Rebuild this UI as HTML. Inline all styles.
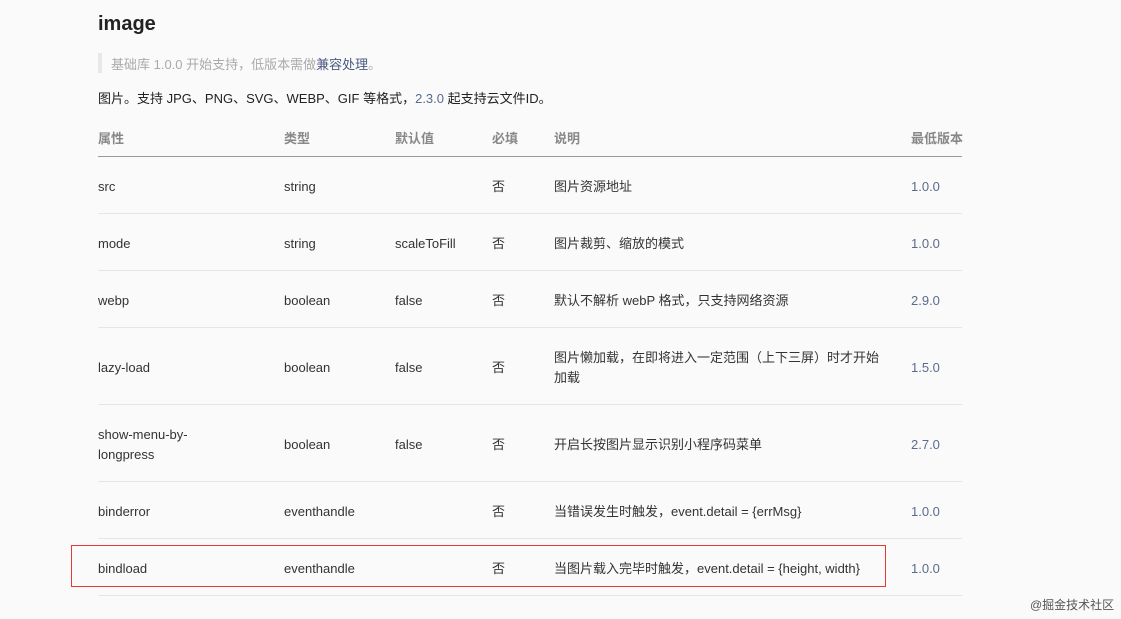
<!DOCTYPE html><html><head><meta charset="utf-8"><style>
body{margin:0;width:1121px;height:619px;background:#fafafa;font-family:"Liberation Sans","Noto Sans CJK SC",sans-serif;position:relative;overflow:hidden;color:#333;font-size:13px}
.a{position:absolute;white-space:nowrap;line-height:20px;transform:translateY(2px)}
.l{position:absolute;left:98px;width:864px;height:1px;background:#e6e6e6}
.v{color:#5a6b8c}
.h{color:#888;font-weight:bold}
.r{position:absolute;background:rgb(229,57,53)}
</style></head><body>
<div class="a" style="left:98px;top:12px;font-size:20px;font-weight:bold;color:#222;line-height:24px;transform:none">image</div>
<div style="position:absolute;left:98px;top:53px;width:4px;height:20px;background:#e8e8e8"></div>
<div class="a" style="left:111px;top:53px;color:#aaa">基础库 1.0.0 开始支持，低版本需做<span style="color:#4a5a80">兼容处理</span>。</div>
<div class="a" style="left:98px;top:87px;color:#222">图片。支持 JPG、PNG、SVG、WEBP、GIF 等格式，<span class="v">2.3.0</span> 起支持云文件ID。</div>
<div class="a h" style="left:98px;top:127px">属性</div>
<div class="a h" style="left:284px;top:127px">类型</div>
<div class="a h" style="left:395px;top:127px">默认值</div>
<div class="a h" style="left:492px;top:127px">必填</div>
<div class="a h" style="left:554px;top:127px">说明</div>
<div class="a h" style="left:911px;top:127px">最低版本</div>
<div class="l" style="top:156px;background:#999"></div>
<div class="l" style="top:213px"></div><div class="l" style="top:270px"></div><div class="l" style="top:327px"></div><div class="l" style="top:404px"></div><div class="l" style="top:481px"></div><div class="l" style="top:538px"></div><div class="l" style="top:595px"></div>

<div class="a" style="left:98px;top:175px">src</div><div class="a" style="left:284px;top:175px">string</div><div class="a" style="left:492px;top:175px">否</div><div class="a" style="left:554px;top:175px">图片资源地址</div><div class="a v" style="left:911px;top:175px">1.0.0</div>
<div class="a" style="left:98px;top:232px">mode</div><div class="a" style="left:284px;top:232px">string</div><div class="a" style="left:395px;top:232px">scaleToFill</div><div class="a" style="left:492px;top:232px">否</div><div class="a" style="left:554px;top:232px">图片裁剪、缩放的模式</div><div class="a v" style="left:911px;top:232px">1.0.0</div>
<div class="a" style="left:98px;top:289px">webp</div><div class="a" style="left:284px;top:289px">boolean</div><div class="a" style="left:395px;top:289px">false</div><div class="a" style="left:492px;top:289px">否</div><div class="a" style="left:554px;top:289px">默认不解析 webP 格式，只支持网络资源</div><div class="a v" style="left:911px;top:289px">2.9.0</div>
<div class="a" style="left:98px;top:356px">lazy-load</div><div class="a" style="left:284px;top:356px">boolean</div><div class="a" style="left:395px;top:356px">false</div><div class="a" style="left:492px;top:356px">否</div><div class="a" style="left:554px;top:346px">图片懒加载，在即将进入一定范围（上下三屏）时才开始<br>加载</div><div class="a v" style="left:911px;top:356px">1.5.0</div>
<div class="a" style="left:98px;top:423px">show-menu-by-<br>longpress</div><div class="a" style="left:284px;top:433px">boolean</div><div class="a" style="left:395px;top:433px">false</div><div class="a" style="left:492px;top:433px">否</div><div class="a" style="left:554px;top:433px">开启长按图片显示识别小程序码菜单</div><div class="a v" style="left:911px;top:433px">2.7.0</div>
<div class="a" style="left:98px;top:500px">binderror</div><div class="a" style="left:284px;top:500px">eventhandle</div><div class="a" style="left:492px;top:500px">否</div><div class="a" style="left:554px;top:500px">当错误发生时触发，event.detail = {errMsg}</div><div class="a v" style="left:911px;top:500px">1.0.0</div>
<div class="a" style="left:98px;top:557px">bindload</div><div class="a" style="left:284px;top:557px">eventhandle</div><div class="a" style="left:492px;top:557px">否</div><div class="a" style="left:554px;top:557px">当图片载入完毕时触发，event.detail = {height, width}</div><div class="a v" style="left:911px;top:557px">1.0.0</div>
<div class="r" style="left:71px;top:545px;width:815px;height:1px"></div>
<div class="r" style="left:71px;top:586px;width:815px;height:1px"></div>
<div class="r" style="left:71px;top:545px;width:1px;height:42px"></div>
<div class="r" style="left:885px;top:545px;width:1px;height:42px"></div>
<div class="a" style="left:1030px;top:593px;font-size:12px;color:#555">@掘金技术社区</div>
</body></html>
